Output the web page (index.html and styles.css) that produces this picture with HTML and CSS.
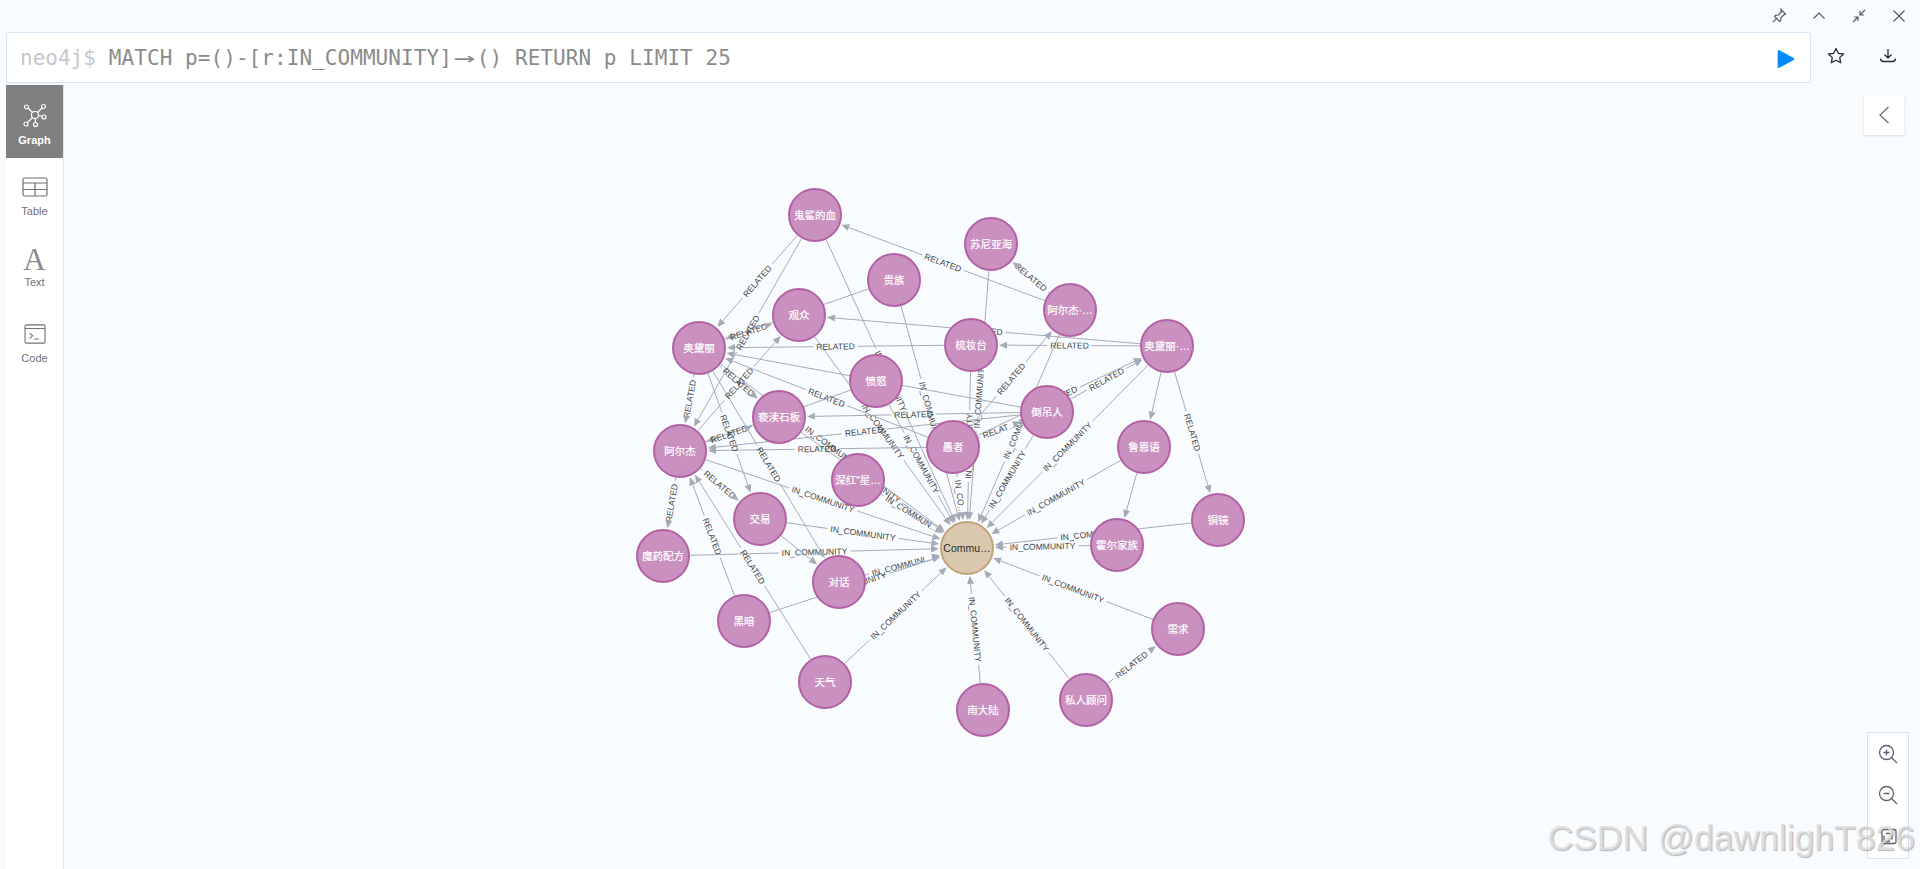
FILE: index.html
```html
<!DOCTYPE html>
<html>
<head>
  <title>Neo4j Browser</title>
  <meta name="viewport" content="width=device-width, initial-scale=1.0">
  <link rel="stylesheet" href="styles.css">
</head>
<body>
  <div class="window-bar">
    <svg class="win-icon" viewBox="0 0 16 16"><path d="M10 1.500l4.500 4.500-1.200.6-3.300 3-.4 3-1 .8-5-5 .8-1 3-.4 3-3.300zM5.200 10.800L1.800 14.200"/></svg>
    <svg class="win-icon" viewBox="0 0 16 16"><path d="M2.500 10.500L8 5l5.500 5.500"/></svg>
    <svg class="win-icon" viewBox="0 0 16 16"><path d="M14 2L9 7M9 3v4h4M2 14l5-5M3 9h4v4"/></svg>
    <svg class="win-icon" viewBox="0 0 16 16"><path d="M2.500 2.500l11 11M13.500 2.500l-11 11"/></svg>
  </div>

  <div class="editor-row">
    <div class="editor">
      <span class="prompt">neo4j$</span>
      <span class="query">MATCH p=()-[r:IN_COMMUNITY]<span class="arrow">→</span>() RETURN p LIMIT 25</span>
      <svg class="play" viewBox="0 0 16 18"><path d="M1.500 2v14l13-7z"/></svg>
    </div>
    <div class="editor-actions">
      <svg class="action-icon" viewBox="0 0 20 20"><path d="M10 2.500l2.300 4.800 5.200.7-3.800 3.600 1 5.200-4.700-2.500-4.700 2.500 1-5.200-3.800-3.600 5.200-.7z"/></svg>
      <svg class="action-icon" viewBox="0 0 20 20"><path d="M10 3v9M6.500 8.500L10 12l3.500-3.500M2.500 12.500c0 2 1 3 3 3h9c2 0 3-1 3-3"/></svg>
    </div>
  </div>

  <div class="main">
    <nav class="sidebar">
      <div class="tab tab-active">
        <svg class="tab-icon" viewBox="0 0 26 26">
          <path d="M13 13L5.500 5.500M13 13l7.500-7.500M13 13l-8 8M13 13l8 1.500M13 13l.5 8"/>
          <circle class="hole" cx="13" cy="13" r="3.500"/>
          <circle class="hole" cx="4.500" cy="5" r="2"/>
          <circle class="hole" cx="21.500" cy="4.500" r="2"/>
          <circle class="hole" cx="4" cy="22" r="2"/>
          <circle class="hole" cx="22" cy="15" r="2"/>
          <circle class="hole" cx="13.500" cy="22.500" r="2"/>
        </svg>
        <span>Graph</span>
      </div>
      <div class="tab tab-table">
        <svg class="tab-icon" viewBox="0 0 26 20"><rect x="1" y="1" width="24" height="18" rx="1.500"/><path d="M1 6h24M1 12.500h24M13 6v13"/></svg>
        <span>Table</span>
      </div>
      <div class="tab tab-text">
        <span class="glyph-a">A</span>
        <span>Text</span>
      </div>
      <div class="tab">
        <svg class="tab-icon" viewBox="0 0 24 22"><rect x="1" y="1" width="22" height="20" rx="1.500"/><path d="M1 5h22M6 10l3.500 3L6 16M11 16.500h5"/></svg>
        <span>Code</span>
      </div>
    </nav>

    <div class="canvas">
      <svg id="graph" class="graph" viewBox="64 85 1856 784"></svg>

      <button class="collapse">
        <svg viewBox="0 0 14 20"><path d="M11.500 2L3 10l8.500 8"/></svg>
      </button>

      <div class="zoom-panel">
        <svg class="zoom-icon" viewBox="0 0 20 20"><circle cx="8.500" cy="8.500" r="7"/><path d="M13.500 13.500l5.500 5.500M5.500 8.500h6M8.500 5.500v6"/></svg>
        <svg class="zoom-icon" viewBox="0 0 20 20"><circle cx="8.500" cy="8.500" r="7"/><path d="M13.500 13.500l5.500 5.500M5.500 8.500h6"/></svg>
        <svg class="zoom-icon" viewBox="0 0 20 20"><rect x="4" y="2.500" width="14" height="14" rx="2"/><path d="M8 6.500h6v6M12 14.500H6v-6M1.500 18.500l5-5"/></svg>
      </div>

      <div class="watermark">CSDN @dawnlighT826</div>
    </div>
  </div>

  <script src="graph.js"></script>
</body>
</html>
```

FILE: styles.css
```css
html, body {
  height: 100%;
}

body {
  margin: 0;
  background-color: #f9fcff;
  font-family: "Liberation Sans", Arial, sans-serif;
  display: flex;
  flex-direction: column;
  overflow: hidden;
}

.window-bar {
  height: 32px;
  display: flex;
  justify-content: flex-end;
  align-items: center;
  gap: 24px;
  padding: 0 13px 0 0;
  box-sizing: border-box;
}

.win-icon {
  width: 16px;
  height: 16px;
  fill: none;
  stroke: #555a66;
  stroke-width: 1.2;
}

.editor-row {
  display: flex;
  height: 51px;
  padding-left: 6px;
}

.editor {
  width: 1805px;
  box-sizing: border-box;
  background-color: #ffffff;
  border: 1px solid #d5e3ef;
  border-radius: 2px;
  display: flex;
  align-items: center;
  padding-left: 13px;
  font-family: "DejaVu Sans Mono", monospace;
  font-size: 21px;
}

.prompt {
  color: #c4c7cc;
  margin-right: 13px;
}

.query {
  color: #8b8b8b;
  flex: 1;
  letter-spacing: 0.06px;
}

.arrow {
  display: inline-block;
  width: 25px;
  text-align: center;
  transform: scaleX(1.7);
}

.play {
  width: 18px;
  height: 20px;
  margin-right: 15px;
  margin-top: 3px;
  fill: #018bff;
  stroke: #018bff;
  stroke-linejoin: round;
  stroke-width: 2;
}

.editor-actions {
  display: flex;
  align-items: center;
  gap: 32px;
  padding-left: 15px;
  padding-bottom: 3px;
}

.action-icon {
  width: 20px;
  height: 20px;
  fill: none;
  stroke: #2a2c34;
  stroke-width: 1.3;
  stroke-linejoin: round;
}

.main {
  flex: 1;
  display: flex;
  padding-top: 2px;
  padding-left: 6px;
  min-height: 0;
}

.sidebar {
  width: 57px;
  flex: none;
  background-color: #ffffff;
  border-right: 1px solid #e4e9ef;
  box-sizing: content-box;
}

.tab {
  height: 73px;
  box-sizing: border-box;
  margin-bottom: 1px;
  display: flex;
  flex-direction: column;
  align-items: center;
  justify-content: center;
  gap: 8px;
  font-size: 11px;
  color: #717172;
}

.tab-active {
  background-color: #808080;
  color: #ffffff;
  font-weight: bold;
  gap: 6px;
  padding-top: 4px;
}

.tab-table {
  padding-top: 3px;
}

.tab-text {
  gap: 5px;
  padding-bottom: 2px;
}

.tab-icon {
  width: 26px;
  height: 20px;
  fill: none;
  stroke: #717172;
  stroke-width: 1.2;
}

.tab-active .tab-icon {
  height: 26px;
  stroke: #ffffff;
}

.tab-icon .hole {
  fill: #808080;
}

.glyph-a {
  font-family: "Liberation Serif", serif;
  font-size: 31px;
  line-height: 22px;
  font-weight: normal;
  color: #8a8a8a;
}

.canvas {
  flex: 1;
  position: relative;
  min-width: 0;
}

.graph {
  display: block;
  width: 1856px;
  height: 784px;
}

.edge-line {
  stroke: #a5abb6;
  stroke-width: 1;
  fill: none;
}

.edge-head {
  fill: #a5abb6;
}

.edge-label {
  font-size: 8.5px;
  fill: #444444;
  text-anchor: middle;
}

.node-circle {
  fill: #c990c0;
  stroke: #b261a5;
  stroke-width: 2;
}

.node-community {
  fill: #d9c8ae;
  stroke: #c0a378;
}

.node-label {
  font-family: "Liberation Sans", "Noto Sans CJK SC", sans-serif;
  font-size: 10.5px;
  fill: #ffffff;
  stroke: #ffffff;
  stroke-width: 0.2px;
  text-anchor: middle;
}

.node-label-dark {
  fill: #2a2c34;
  stroke: none;
}

.collapse {
  position: absolute;
  top: 10px;
  right: 16px;
  width: 40px;
  height: 40px;
  padding: 0;
  background-color: #ffffff;
  border: none;
  box-shadow: 0 1px 3px rgba(0, 0, 0, 0.12);
  display: flex;
  align-items: center;
  justify-content: center;
}

.collapse svg {
  width: 14px;
  height: 20px;
  fill: none;
  stroke: #717172;
  stroke-width: 1.3;
}

.zoom-panel {
  position: absolute;
  top: 647px;
  right: 11px;
  width: 42px;
  height: 127px;
  box-sizing: border-box;
  background-color: #ffffff;
  border: 1px solid #d5e0f0;
  display: flex;
  flex-direction: column;
  align-items: center;
  justify-content: space-around;
}

.zoom-icon {
  width: 20px;
  height: 20px;
  fill: none;
  stroke: #5a6070;
  stroke-width: 1.3;
}

.watermark {
  position: absolute;
  right: 5px;
  top: 731px;
  font-size: 35.5px;
  line-height: 44px;
  color: rgba(225, 225, 225, 0.85);
  text-shadow: 1px 1px 1px rgba(120, 120, 120, 0.55);
  white-space: nowrap;
}
```

FILE: graph.js
```js
const SVG_NS = "http://www.w3.org/2000/svg";
const NODE_R = 27;
const ARROW_LEN = 8;

const nodes = {
  guisha: { x: 815, y: 215, text: "鬼鲨的血" },
  guizu: { x: 894, y: 280, text: "贵族" },
  guanzhong: { x: 799, y: 315, text: "观众" },
  audrey: { x: 699, y: 348, text: "奥黛丽" },
  suniya: { x: 991, y: 244, text: "苏尼亚海" },
  algerFull: { x: 1070, y: 310, text: "阿尔杰·…" },
  shuzhuang: { x: 971, y: 345, text: "梳妆台" },
  audreyFull: { x: 1167, y: 346, text: "奥黛丽·…" },
  hanged: { x: 1047, y: 412, text: "倒吊人" },
  fennu: { x: 876, y: 381, text: "愤怒" },
  xidu: { x: 779, y: 417, text: "亵渎石板" },
  alger: { x: 680, y: 451, text: "阿尔杰" },
  shenhong: { x: 858, y: 480, text: "深红“星…" },
  fool: { x: 953, y: 447, text: "愚者" },
  jiaoyi: { x: 760, y: 519, text: "交易" },
  moyao: { x: 663, y: 556, text: "魔药配方" },
  duihua: { x: 839, y: 582, text: "对话" },
  heian: { x: 744, y: 621, text: "黑暗" },
  community: { x: 967, y: 548, text: "Commu…", dark: true },
  luen: { x: 1144, y: 447, text: "鲁恩语" },
  tongjing: { x: 1218, y: 520, text: "铜镜" },
  huoer: { x: 1117, y: 545, text: "霍尔家族" },
  xuqiu: { x: 1178, y: 629, text: "需求" },
  guwen: { x: 1086, y: 700, text: "私人顾问" },
  nandalu: { x: 983, y: 710, text: "南大陆" },
  tianqi: { x: 825, y: 682, text: "天气" }
};

const IC = "IN_COMMUNITY";
const REL = "RELATED";

// from, to, label
const edges = [
  ["luen", "community", IC],
  ["huoer", "community", IC],
  ["tongjing", "community", IC],
  ["xuqiu", "community", IC],
  ["guwen", "community", IC],
  ["nandalu", "community", IC],
  ["tianqi", "community", IC],
  ["duihua", "community", "IN_COMMUNI…"],
  ["heian", "community", IC],
  ["moyao", "community", IC],
  ["jiaoyi", "community", IC],
  ["alger", "community", IC],
  ["shenhong", "community", "IN_COMMUN…"],
  ["xidu", "community", IC],
  ["audrey", "community", IC],
  ["guanzhong", "community", IC],
  ["fennu", "community", IC],
  ["guisha", "community", IC],
  ["guizu", "community", IC],
  ["suniya", "community", IC],
  ["shuzhuang", "community", IC],
  ["fool", "community", "IN_CO…"],
  ["hanged", "community", IC],
  ["algerFull", "community", IC],
  ["audreyFull", "community", IC],

  ["guisha", "audrey", REL],
  ["guisha", "alger", REL],
  ["algerFull", "guisha", REL],
  ["algerFull", "suniya", REL],
  ["audreyFull", "shuzhuang", REL],
  ["audreyFull", "guanzhong", REL],
  ["audreyFull", "tongjing", REL],
  ["audreyFull", "luen", ""],
  ["luen", "huoer", ""],
  ["shuzhuang", "audrey", REL],
  ["guizu", "audrey", REL],
  ["hanged", "audreyFull", REL],
  ["fool", "audreyFull", REL],
  ["fool", "algerFull", REL],
  ["fool", "hanged", "RELAT…"],
  ["fool", "alger", REL],
  ["fool", "audrey", REL],
  ["hanged", "audrey", REL],
  ["hanged", "xidu", REL],
  ["hanged", "alger", REL],
  ["fennu", "alger", REL],
  ["audrey", "guanzhong", REL],
  ["audrey", "xidu", REL],
  ["audrey", "alger", REL],
  ["audrey", "jiaoyi", REL],
  ["audrey", "duihua", REL],
  ["alger", "guanzhong", REL],
  ["alger", "xidu", REL],
  ["alger", "moyao", REL],
  ["alger", "jiaoyi", REL],
  ["jiaoyi", "duihua", ""],
  ["heian", "alger", REL],
  ["tianqi", "alger", REL],
  ["guwen", "xuqiu", REL]
];

function el(name, attrs, parent) {
  const e = document.createElementNS(SVG_NS, name);
  for (const k in attrs) e.setAttribute(k, attrs[k]);
  parent.appendChild(e);
  return e;
}

function drawEdge(svg, edge) {
  const a = nodes[edge[0]];
  const b = nodes[edge[1]];
  const dist = Math.hypot(b.x - a.x, b.y - a.y);
  const ux = (b.x - a.x) / dist;
  const uy = (b.y - a.y) / dist;

  const x1 = a.x + ux * NODE_R;
  const y1 = a.y + uy * NODE_R;
  const tipX = b.x - ux * (NODE_R + 1);
  const tipY = b.y - uy * (NODE_R + 1);
  const x2 = tipX - ux * ARROW_LEN;
  const y2 = tipY - uy * ARROW_LEN;
  const midX = (x1 + tipX) / 2;
  const midY = (y1 + tipY) / 2;

  const g = el("g", {}, svg);
  let gap = 0;

  if (edge[2]) {
    let angle = Math.atan2(uy, ux) * 180 / Math.PI;
    if (angle > 90 || angle < -90) angle += 180;
    const label = el("text", {
      class: "edge-label",
      x: 0,
      y: 3,
      transform: `translate(${midX} ${midY}) rotate(${angle})`
    }, g);
    label.textContent = edge[2];
    gap = label.getComputedTextLength() / 2 + 3;
  }

  if (gap) {
    el("line", { class: "edge-line", x1: x1, y1: y1, x2: midX - ux * gap, y2: midY - uy * gap }, g);
    const before = Math.hypot(x2 - midX, y2 - midY);
    if (before > gap) {
      el("line", { class: "edge-line", x1: midX + ux * gap, y1: midY + uy * gap, x2: x2, y2: y2 }, g);
    }
  } else {
    el("line", { class: "edge-line", x1: x1, y1: y1, x2: x2, y2: y2 }, g);
  }

  const px = -uy * 3.5;
  const py = ux * 3.5;
  el("polygon", {
    class: "edge-head",
    points: `${tipX},${tipY} ${x2 + px},${y2 + py} ${x2 - px},${y2 - py}`
  }, g);
}

function drawNode(svg, node) {
  el("circle", {
    class: node.dark ? "node-circle node-community" : "node-circle",
    cx: node.x,
    cy: node.y,
    r: NODE_R - 1
  }, svg);
  const label = el("text", {
    class: node.dark ? "node-label node-label-dark" : "node-label",
    x: node.x,
    y: node.y + 4
  }, svg);
  label.textContent = node.text;
}

const svg = document.getElementById("graph");
edges.forEach(e => drawEdge(svg, e));
Object.values(nodes).forEach(n => drawNode(svg, n));
```
